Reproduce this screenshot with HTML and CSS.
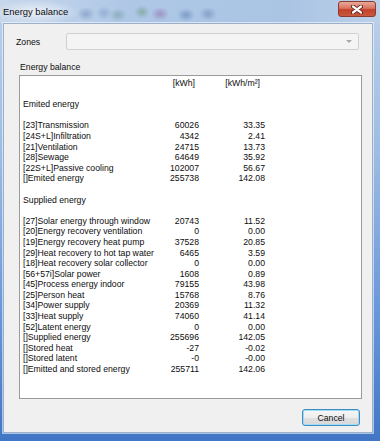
FILE: index.html
```html
<!DOCTYPE html>
<html lang="en">
<head>
    <meta charset="UTF-8">
    <meta name="viewport" content="width=device-width, initial-scale=1.0">
    <title>Energy balance</title>
    <link rel="stylesheet" href="styles.css">
</head>
<body>
    <div class="window">
        <div class="titlebar">
            <span class="title">Energy balance</span>
            <div class="close">
                <svg width="12" height="9" viewBox="0 0 12 9">
                    <path d="M2 1.5 L10 7.5 M10 1.5 L2 7.5" stroke="#5a1a14" stroke-width="4" stroke-linecap="round"/>
                    <path d="M2 1.5 L10 7.5 M10 1.5 L2 7.5" stroke="#ffffff" stroke-width="2.2" stroke-linecap="round"/>
                </svg>
            </div>
        </div>

        <div class="client">
            <div class="zones">
                <label class="zones-label">Zones</label>
                <div class="combo"><span class="combo-arrow"></span></div>
            </div>

            <div class="group-label">Energy balance</div>

            <div class="listbox">
                <div class="grid">
                    <div></div><div class="head">[kWh]</div><div class="head head-m2">[kWh/m²]</div>
                    <div class="blank"></div>
                    <div class="section">Emited energy</div>
                    <div class="blank"></div>

                    <div>[23]Transmission</div><div class="num">60026</div><div class="num">33.35</div>
                    <div>[24S+L]Infiltration</div><div class="num">4342</div><div class="num">2.41</div>
                    <div>[21]Ventilation</div><div class="num">24715</div><div class="num">13.73</div>
                    <div>[28]Sewage</div><div class="num">64649</div><div class="num">35.92</div>
                    <div>[22S+L]Passive cooling</div><div class="num">102007</div><div class="num">56.67</div>
                    <div>[]Emited energy</div><div class="num">255738</div><div class="num">142.08</div>

                    <div class="blank"></div>
                    <div class="section">Supplied energy</div>
                    <div class="blank"></div>

                    <div>[27]Solar energy through window</div><div class="num">20743</div><div class="num">11.52</div>
                    <div>[20]Energy recovery ventilation</div><div class="num">0</div><div class="num">0.00</div>
                    <div>[19]Energy recovery heat pump</div><div class="num">37528</div><div class="num">20.85</div>
                    <div>[29]Heat recovery to hot tap water</div><div class="num">6465</div><div class="num">3.59</div>
                    <div>[18]Heat recovery solar collector</div><div class="num">0</div><div class="num">0.00</div>
                    <div>[56+57i]Solar power</div><div class="num">1608</div><div class="num">0.89</div>
                    <div>[45]Process energy indoor</div><div class="num">79155</div><div class="num">43.98</div>
                    <div>[25]Person heat</div><div class="num">15768</div><div class="num">8.76</div>
                    <div>[34]Power supply</div><div class="num">20369</div><div class="num">11.32</div>
                    <div>[33]Heat supply</div><div class="num">74060</div><div class="num">41.14</div>
                    <div>[52]Latent energy</div><div class="num">0</div><div class="num">0.00</div>
                    <div>[]Supplied energy</div><div class="num">255696</div><div class="num">142.05</div>
                    <div>[]Stored heat</div><div class="num">-27</div><div class="num">-0.02</div>
                    <div>[]Stored latent</div><div class="num">-0</div><div class="num">-0.00</div>
                    <div>[]Emitted and stored energy</div><div class="num">255711</div><div class="num">142.06</div>
                </div>
            </div>

            <div class="actions">
                <button type="button" class="btn">Cancel</button>
            </div>
        </div>
    </div>
</body>
</html>
```

FILE: styles.css
```css
body {
    margin: 0;
    font-family: "Liberation Sans", Arial, sans-serif;
    background: #6d98d4;
}
.window {
    width: 380px;
    height: 441px;
    box-sizing: border-box;
    padding: 0 7px 8px 3px;
    display: flex;
    flex-direction: column;
    background: linear-gradient(to bottom, #bcd1ea 0%, #9dbbe3 35%, #6a98da 70%, #4176c6 100%);
}
.titlebar {
    height: 23px;
    margin: 0 -7px 0 -3px;
    padding: 0 4px 0 3px;
    display: flex;
    justify-content: space-between;
    align-items: flex-start;
    background:
        radial-gradient(ellipse 44px 12px at 36px 12px, rgba(236, 241, 248, 0.95), rgba(236, 241, 248, 0)),
        radial-gradient(ellipse 9px 7px at 86px 14px, rgba(70, 100, 160, 0.35), rgba(70, 100, 160, 0)),
        radial-gradient(ellipse 8px 7px at 104px 13px, rgba(80, 115, 180, 0.3), rgba(80, 115, 180, 0)),
        radial-gradient(ellipse 9px 7px at 118px 15px, rgba(70, 125, 115, 0.35), rgba(70, 125, 115, 0)),
        radial-gradient(ellipse 8px 7px at 142px 12px, rgba(80, 135, 90, 0.4), rgba(80, 135, 90, 0)),
        radial-gradient(ellipse 9px 7px at 160px 14px, rgba(135, 70, 145, 0.4), rgba(135, 70, 145, 0)),
        radial-gradient(ellipse 9px 7px at 186px 15px, rgba(50, 95, 155, 0.4), rgba(50, 95, 155, 0)),
        radial-gradient(ellipse 9px 7px at 208px 14px, rgba(60, 95, 155, 0.35), rgba(60, 95, 155, 0)),
        linear-gradient(to right, #c7d7eb 0%, #aec7e6 35%, #aac4e4 75%, #bcd0e9 100%);
}
.title {
    font-size: 9.4px;
    color: #0d0d0d;
    line-height: 12px;
    margin-top: 6px;
}
.close {
    width: 38px;
    height: 16px;
    margin-top: 1px;
    box-sizing: border-box;
    border: 1px solid #8c3b30;
    border-radius: 3px;
    background: linear-gradient(to bottom, #e9a89b 0%, #d8745f 45%, #c4402a 55%, #c85a3e 100%);
    display: flex;
    align-items: center;
    justify-content: center;
}
.close svg {
    display: block;
}
.client {
    flex: 1;
    display: flex;
    flex-direction: column;
    background: #f0f0f0;
    border: 1px solid #9cb0c9;
    box-shadow: 0 0 0 1px rgba(255, 255, 255, 0.55);
    font-size: 8.7px;
    color: #0d0d0d;
}
.zones {
    display: flex;
    align-items: center;
    margin-top: 9px;
    padding-left: 12px;
}
.zones-label {
    width: 50px;
}
.combo {
    width: 293px;
    height: 17px;
    box-sizing: border-box;
    border: 1px solid #d0d0d0;
    border-radius: 2px;
    background: #f4f4f4;
    display: flex;
    justify-content: flex-end;
    align-items: center;
    padding-right: 6px;
}
.combo-arrow {
    width: 0;
    height: 0;
    border-left: 3px solid transparent;
    border-right: 3px solid transparent;
    border-top: 3px solid #a8a8a8;
}
.group-label {
    margin: 11px 0 0 16px;
    line-height: 12px;
}
.listbox {
    margin: 2px 0 0 15px;
    width: 343px;
    height: 324px;
    box-sizing: border-box;
    border: 1px solid #9a9a9a;
    background: #fff;
    padding: 2px 0 0 3px;
}
.grid {
    display: grid;
    grid-template-columns: 130px 46px 66px;
    line-height: 10.6px;
    white-space: nowrap;
}
.num {
    text-align: right;
}
.head {
    text-align: right;
    padding-right: 4px;
}
.head-m2 {
    padding-right: 5px;
}
.section {
    grid-column: 1 / -1;
}
.blank {
    grid-column: 1 / -1;
    height: 10.6px;
}
.actions {
    display: flex;
    justify-content: flex-end;
    margin-top: 10px;
    padding-right: 12px;
}
.btn {
    width: 58px;
    height: 17px;
    padding: 0;
    font-family: inherit;
    font-size: 8.7px;
    color: #0d0d0d;
    border: 1px solid #3c8cbf;
    border-radius: 3px;
    box-shadow: inset 0 0 0 1px #9fdcf5;
    background: linear-gradient(to bottom, #f7f7f7 0%, #ededed 50%, #e0e0e0 52%, #d8d8d8 100%);
    cursor: pointer;
}
```
